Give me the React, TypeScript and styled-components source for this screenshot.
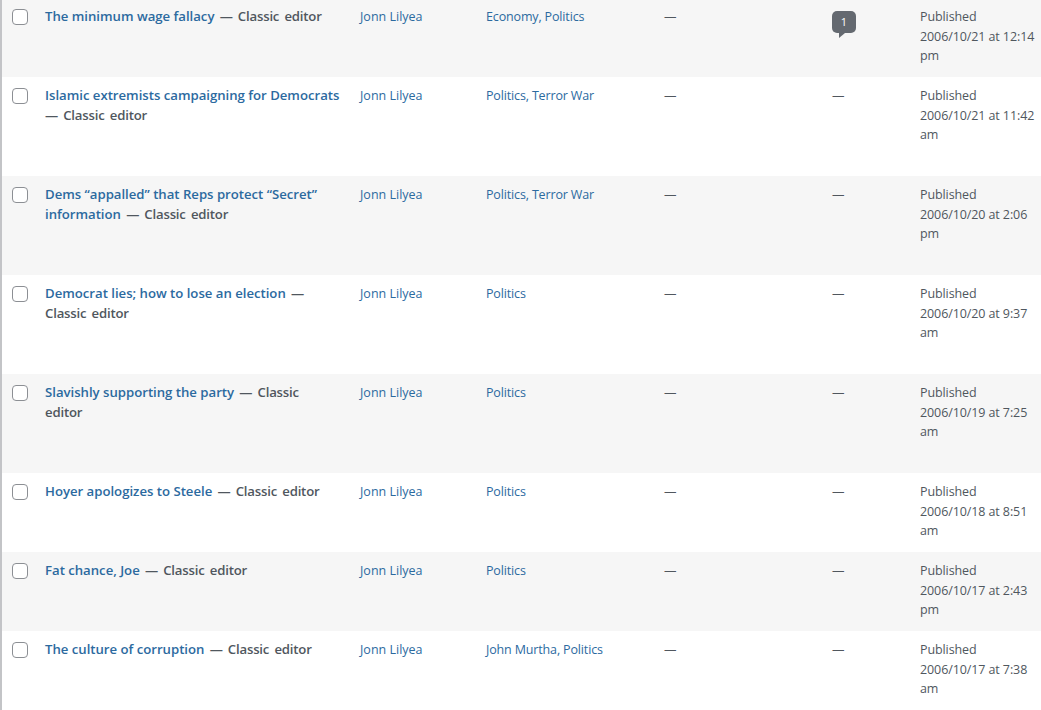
import React from 'react';
import styled, { createGlobalStyle } from 'styled-components';

interface Post {
  title: string;
  categories: string;
  date: string;
  time: string;
  ampm: string;
  comments?: number;
}

const posts: Post[] = [
  { title: 'The minimum wage fallacy', categories: 'Economy, Politics', date: '2006/10/21', time: '12:14', ampm: 'pm', comments: 1 },
  { title: 'Islamic extremists campaigning for Democrats', categories: 'Politics, Terror War', date: '2006/10/21', time: '11:42', ampm: 'am' },
  { title: 'Dems “appalled” that Reps protect “Secret” information', categories: 'Politics, Terror War', date: '2006/10/20', time: '2:06', ampm: 'pm' },
  { title: 'Democrat lies; how to lose an election', categories: 'Politics', date: '2006/10/20', time: '9:37', ampm: 'am' },
  { title: 'Slavishly supporting the party', categories: 'Politics', date: '2006/10/19', time: '7:25', ampm: 'am' },
  { title: 'Hoyer apologizes to Steele', categories: 'Politics', date: '2006/10/18', time: '8:51', ampm: 'am' },
  { title: 'Fat chance, Joe', categories: 'Politics', date: '2006/10/17', time: '2:43', ampm: 'pm' },
  { title: 'The culture of corruption', categories: 'John Murtha, Politics', date: '2006/10/17', time: '7:38', ampm: 'am' },
];

const GlobalStyle = createGlobalStyle`
  html, body {
    margin: 0;
    padding: 0;
    background: #f0f0f1;
    overflow: hidden;
  }
  body {
    font-family: "Open Sans", "Noto Sans", sans-serif;
    font-size: 12.5px;
    line-height: 19.5px;
    color: #50575e;
  }
`;

const PostsTable = styled.table`
  width: 1041px;
  margin-top: -2px;
  border-collapse: separate;
  border-spacing: 0;
  table-layout: fixed;
  border-left: 2px solid #c3c4c7;
`;

const Row = styled.tr<{ $alt: boolean }>`
  background: ${(props) => (props.$alt ? '#f6f6f6' : '#fff')};
`;

const Cell = styled.td<{ $width: number }>`
  width: ${(props) => props.$width}px;
  box-sizing: border-box;
  padding: 9px 10px 7px;
  vertical-align: top;
  overflow-wrap: break-word;
`;

const CheckCell = styled.td`
  width: 33px;
  box-sizing: border-box;
  padding: 11px 0 0 10px;
  vertical-align: top;
`;

const Check = styled.span`
  display: block;
  width: 16px;
  height: 16px;
  box-sizing: border-box;
  border: 1px solid #8c8f94;
  border-radius: 4px;
  background: #fff;
`;

const TitleCell = styled(Cell)`
  padding: 8px 9px 7px 10px;
  font-size: 13.2px;
  line-height: 20px;
  font-weight: 600;
`;

const TitleLink = styled.a`
  color: #2c6a9f;
  text-decoration: none;
  letter-spacing: -0.02px;
`;

const State = styled.span`
  word-spacing: 2px;
  letter-spacing: -0.2px;
`;

const HiddenActions = styled.div`
  height: 44px;
`;

const CellLink = styled.a`
  color: #2c6a9f;
  text-decoration: none;
`;

const CategoryLink = styled(CellLink)`
  letter-spacing: -0.15px;
`;

const DateCell = styled(Cell)`
  padding-right: 0;
  letter-spacing: -0.1px;
`;

const Bubble = styled.span`
  position: relative;
  display: block;
  width: 24px;
  height: 22px;
  margin-top: 4px;
  border-radius: 5px;
  background: #646970;
  color: #fff;
  font-size: 11px;
  line-height: 21px;
  text-align: center;

  &::after {
    content: "";
    position: absolute;
    top: 100%;
    left: 7px;
    border-top: 5px solid #646970;
    border-right: 6px solid transparent;
  }
`;

const App: React.FC = () => (
  <>
    <GlobalStyle />
    <PostsTable>
      <tbody>
        {posts.map((post, i) => (
          <Row key={post.title} $alt={i % 2 === 0}>
            <CheckCell>
              <Check />
            </CheckCell>
            <TitleCell $width={315}>
              <TitleLink href="#">{post.title}</TitleLink>
              <State> — Classic editor</State>
              <HiddenActions />
            </TitleCell>
            <Cell $width={126}>
              <CellLink href="#">Jonn Lilyea</CellLink>
            </Cell>
            <Cell $width={178}>
              <CategoryLink href="#">{post.categories}</CategoryLink>
            </Cell>
            <Cell $width={168}>—</Cell>
            <Cell $width={88}>{post.comments ? <Bubble>{post.comments}</Bubble> : '—'}</Cell>
            <DateCell $width={131}>
              Published
              <br />
              {post.date} at {post.time} {post.ampm}
            </DateCell>
          </Row>
        ))}
      </tbody>
    </PostsTable>
  </>
);

export default App;
